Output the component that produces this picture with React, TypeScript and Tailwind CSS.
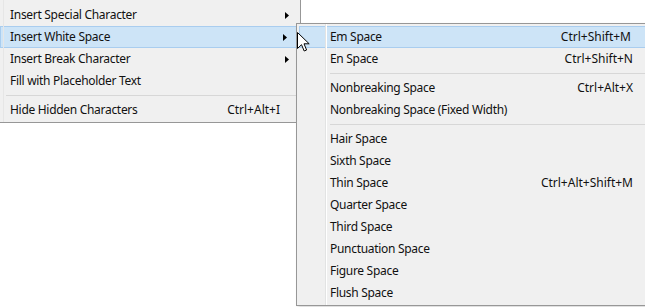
const mainItems = [
  { label: "Insert Special Character", arrow: true },
  { label: "Insert White Space", arrow: true, active: true },
  { label: "Insert Break Character", arrow: true },
  { label: "Fill with Placeholder Text" },
  { sep: true },
  { label: "Hide Hidden Characters", shortcut: "Ctrl+Alt+I" },
];

const subItems = [
  { label: "Em Space", shortcut: "Ctrl+Shift+M", active: true },
  { label: "En Space", shortcut: "Ctrl+Shift+N" },
  { sep: true },
  { label: "Nonbreaking Space", shortcut: "Ctrl+Alt+X" },
  { label: "Nonbreaking Space (Fixed Width)" },
  { sep: true },
  { label: "Hair Space" },
  { label: "Sixth Space" },
  { label: "Thin Space", shortcut: "Ctrl+Alt+Shift+M" },
  { label: "Quarter Space" },
  { label: "Third Space" },
  { label: "Punctuation Space" },
  { label: "Figure Space" },
  { label: "Flush Space" },
];

type Item = { label?: string; shortcut?: string; arrow?: boolean; active?: boolean; sep?: boolean };

function Arrow() {
  return (
    <svg width="4" height="7" viewBox="0 0 4 7">
      <polygon points="0,0 4,3.5 0,7" fill="#000" />
    </svg>
  );
}

function Row({ item, pad }: { item: Item; pad: number }) {
  const active = item.active;
  return (
    <div
      className={
        active
          ? "flex h-[22px] items-center border border-[#a9cdef] bg-[#cde4f7] mr-[2px]"
          : "flex h-[22px] items-center"
      }
      style={{ paddingLeft: active ? pad - 1 : pad }}
    >
      <span className="flex-1 whitespace-nowrap tracking-[-0.3px]">{item.label}</span>
      {item.shortcut && <span className="whitespace-nowrap">{item.shortcut}</span>}
      <span className={active ? "w-[19px] pl-[5px] flex items-center" : "w-[20px] pl-[5px] flex items-center"}>
        {item.arrow && <Arrow />}
      </span>
    </div>
  );
}

export default function App() {
  return (
    <div
      className="relative w-[645px] h-[307px] overflow-hidden bg-white text-[12px] text-[#111]"
      style={{ fontFamily: '"Noto Sans", "Segoe UI", sans-serif' }}
    >
      {/* main menu */}
      <div className="relative w-[301px] bg-[#f0f0f0] border-r border-b border-[#979797] pt-[4px] pb-[1px]">
        <div className="absolute left-[3px] top-0 bottom-0 w-px bg-[#e6e6e6]" />
        {mainItems.map((it, i) =>
          it.sep ? (
            <div key={i} className="h-[7px] flex items-center pl-[6px] pr-[4px]">
              <div className="h-px w-full bg-[#d7d7d7]" />
            </div>
          ) : (
            <Row key={i} item={it} pad={10} />
          )
        )}
      </div>

      {/* sub menu */}
      <div className="absolute left-[296px] top-[23px] w-[358px] bg-[#f0f0f0] border border-[#979797] pt-[2px] pb-[1px] shadow-[2px_2px_3px_rgba(0,0,0,0.15)]">
        <div className="pl-[2px]">
          {subItems.map((it, i) =>
            it.sep ? (
              <div key={i} className="h-[7px] flex items-center pl-[31px] pr-[2px]">
                <div className="h-px w-full bg-[#d7d7d7]" />
              </div>
            ) : (
              <Row key={i} item={it} pad={31} />
            )
          )}
        </div>
        <div className="absolute left-[28px] top-0 bottom-0 w-px bg-[#e2e3e3]" />
        <div className="absolute left-[29px] top-0 bottom-0 w-px bg-white" />
      </div>

      {/* mouse cursor */}
      <svg className="absolute left-[297px] top-[32px]" width="13" height="21" viewBox="0 0 13 21">
        <path
          d="M0.5 0.5 L0.5 16.5 L4.5 12.7 L7.2 19 L9.6 18 L7 11.8 L12.2 11.8 Z"
          fill="#fff"
          stroke="#000"
          strokeWidth="1"
          strokeLinejoin="miter"
        />
      </svg>
    </div>
  );
}
